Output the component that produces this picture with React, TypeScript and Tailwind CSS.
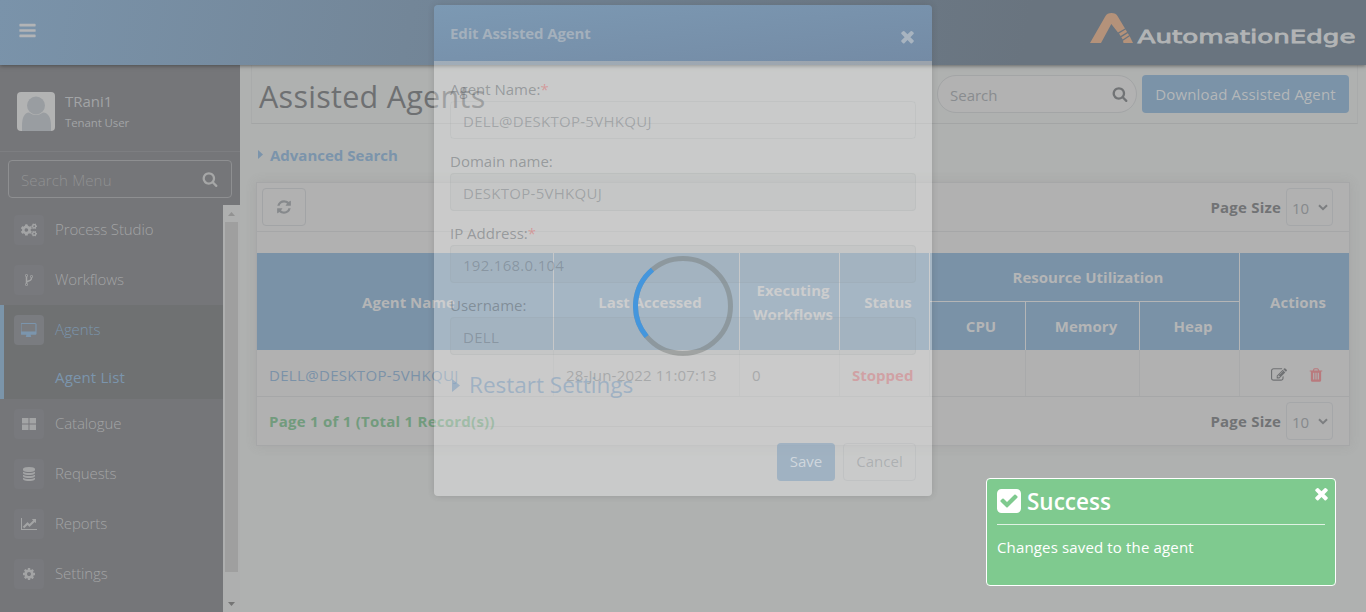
import React from 'react';
import { FaCogs } from 'react-icons/fa';

const PATHS = {
  bars: 'M1664 1344v128q0 26-19 45t-45 19h-1408q-26 0-45-19t-19-45v-128q0-26 19-45t45-19h1408q26 0 45 19t19 45zm0-512v128q0 26-19 45t-45 19h-1408q-26 0-45-19t-19-45v-128q0-26 19-45t45-19h1408q26 0 45 19t19 45zm0-512v128q0 26-19 45t-45 19h-1408q-26 0-45-19t-19-45v-128q0-26 19-45t45-19h1408q26 0 45 19t19 45z',
  times: 'M1490 1322q0 40-28 68l-136 136q-28 28-68 28t-68-28l-294-294-294 294q-28 28-68 28t-68-28l-136-136q-28-28-28-68t28-68l294-294-294-294q-28-28-28-68t28-68l136-136q28-28 68-28t68 28l294 294 294-294q28-28 68-28t68 28l136 136q28 28 28 68t-28 68l-294 294 294 294q28 28 28 68z',
  check: 'M813 1299l614-614q19-19 19-45t-19-45l-102-102q-19-19-45-19t-45 19l-467 467-211-211q-19-19-45-19t-45 19l-102 102q-19 19-19 45t19 45l358 358q19 19 45 19t45-19zm851-883v960q0 119-84.5 203.5t-203.5 84.5h-960q-119 0-203.5-84.5t-84.5-203.5v-960q0-119 84.5-203.5t203.5-84.5h960q119 0 203.5 84.5t84.5 203.5z',
  refresh: 'M1639 1056q0 5-1 7-64 268-268 434.5t-478 166.5q-146 0-282.5-55t-243.5-157l-129 129q-19 19-45 19t-45-19-19-45v-448q0-26 19-45t45-19h448q26 0 45 19t19 45-19 45l-137 137q71 66 161 102t187 36q134 0 250-65t186-179q11-17 53-117 8-23 30-23h192q13 0 22.5 9.5t9.5 22.5zm25-800v448q0 26-19 45t-45 19h-448q-26 0-45-19t-19-45 19-45l138-138q-148-137-349-137-134 0-250 65t-186 179q-11 17-53 117-8 23-30 23h-199q-13 0-22.5-9.5t-9.5-22.5v-7q65-268 270-434.5t480-166.5q146 0 284 55.5t245 156.5l130-129q19-19 45-19t45 19 19 45z',
  search: 'M1216 832q0-185-131.5-316.5t-316.5-131.5-316.5 131.5-131.5 316.5 131.5 316.5 316.5 131.5 316.5-131.5 131.5-316.5zm512 832q0 52-38 90t-90 38q-54 0-90-38l-343-342q-179 124-399 124-143 0-273.5-55.5t-225-150-150-225-55.5-273.5 55.5-273.5 150-225 225-150 273.5-55.5 273.5 55.5 225 150 150 225 55.5 273.5q0 220-124 399l343 343q37 37 37 90z',
  trash: 'M704 1376v-704q0-14-9-23t-23-9h-64q-14 0-23 9t-9 23v704q0 14 9 23t23 9h64q14 0 23-9t9-23zm256 0v-704q0-14-9-23t-23-9h-64q-14 0-23 9t-9 23v704q0 14 9 23t23 9h64q14 0 23-9t9-23zm256 0v-704q0-14-9-23t-23-9h-64q-14 0-23 9t-9 23v704q0 14 9 23t23 9h64q14 0 23-9t9-23zm-544-992h448l-48-117q-7-9-17-11h-317q-10 2-17 11zm928 32v64q0 14-9 23t-23 9h-96v948q0 83-47 143.5t-113 60.5h-832q-66 0-113-58.5t-47-141.5v-952h-96q-14 0-23-9t-9-23v-64q0-14 9-23t23-9h309l70-167q15-37 54-63t79-26h320q40 0 79 26t54 63l70 167h309q14 0 23 9t9 23z',
  edit: 'M888 1184l116-116-152-152-116 116v56h96v96h56zm440-720q-16-16-33 1l-350 350q-17 17-1 33t33-1l350-350q17-17 1-33zm80 594v190q0 119-84.5 203.5t-203.5 84.5h-832q-119 0-203.5-84.5t-84.5-203.5v-832q0-119 84.5-203.5t203.5-84.5h832q63 0 117 25 15 7 18 23 3 17-9 29l-49 49q-14 14-32 8-23-6-45-6h-832q-66 0-113 47t-47 113v832q0 66 47 113t113 47h832q66 0 113-47t47-113v-126q0-13 9-22l64-64q15-15 35-7t20 29zm-96-738l288 288-672 672h-288v-288zm444 132l-92 92-288-288 92-92q28-28 68-28t68 28l152 152q28 28 28 68t-28 68z',
  cog: 'M1152 896q0-106-75-181t-181-75-181 75-75 181 75 181 181 75 181-75 75-181zm512-109v222q0 12-8 23t-20 13l-185 28q-19 54-39 91 35 50 107 138 10 12 10 25t-9 23q-27 37-99 108t-94 71q-12 0-26-9l-138-108q-44 23-91 38-16 136-29 186-7 28-36 28h-222q-14 0-24.5-8.5t-11.5-21.5l-28-184q-49-16-90-37l-141 107q-10 9-25 9-14 0-25-11-126-114-165-168-7-10-7-23 0-12 8-23 15-21 51-66.5t54-70.5q-27-50-41-99l-183-27q-13-2-21-12.5t-8-23.5v-222q0-12 8-23t19-13l186-28q14-46 39-92-40-57-107-138-10-12-10-24 0-10 9-23 26-36 98.5-107.5t94.5-71.5q13 0 26 10l138 107q44-23 91-38 16-136 29-186 7-28 36-28h222q14 0 24.5 8.5t11.5 21.5l28 184q49 16 90 37l142-107q9-9 24-9 13 0 25 10 129 119 165 170 7 8 7 22 0 12-8 23-15 21-51 66.5t-54 70.5q26 50 41 98l183 28q13 2 21 12.5t8 23.5z',
  database: 'M896 768q237 0 443-43t325-127v170q0 69-103 128t-280 93.5-385 34.5-385-34.5-280-93.5-103-128v-170q119 84 325 127t443 43zm0 768q237 0 443-43t325-127v170q0 69-103 128t-280 93.5-385 34.5-385-34.5-280-93.5-103-128v-170q119 84 325 127t443 43zm0-384q237 0 443-43t325-127v170q0 69-103 128t-280 93.5-385 34.5-385-34.5-280-93.5-103-128v-170q119 84 325 127t443 43zm0-1152q208 0 385 34.5t280 93.5 103 128v128q0 69-103 128t-280 93.5-385 34.5-385-34.5-280-93.5-103-128v-128q0-69 103-128t280-93.5 385-34.5z',
  fork: 'M672 1472q0-40-28-68t-68-28-68 28-28 68 28 68 68 28 68-28 28-68zm0-1152q0-40-28-68t-68-28-68 28-28 68 28 68 68 28 68-28 28-68zm640 128q0-40-28-68t-68-28-68 28-28 68 28 68 68 28 68-28 28-68zm96 0q0 52-26 96.5t-70 69.5q-2 287-226 414-67 38-203 81-128 40-169.5 71t-41.5 100v26q44 25 70 69.5t26 96.5q0 80-56 136t-136 56-136-56-56-136q0-52 26-96.5t70-69.5v-820q-44-25-70-69.5t-26-96.5q0-80 56-136t136-56 136 56 56 136q0 52-26 96.5t-70 69.5v497q54-26 154-57 55-17 87.5-29.5t70.5-31 59-39.5 40.5-51 28-69.5 8.5-91.5q-44-25-70-69.5t-26-96.5q0-80 56-136t136-56 136 56 56 136z',
  chart: 'M2048 1536v128h-2048v-1536h128v1408h1920zm-128-1248v435q0 21-19.5 29.5t-35.5-7.5l-121-121-633 633q-10 10-23 10t-23-10l-233-233-416 416-192-192 585-585q10-10 23-10t23 10l233 233 464-464-121-121q-16-16-7.5-35.5t29.5-19.5h435q14 0 23 9t9 23z',
  desktop: 'M1728 992v-832q0-13-9.5-22.5t-22.5-9.5h-1600q-13 0-22.5 9.5t-9.5 22.5v832q0 13 9.5 22.5t22.5 9.5h1600q13 0 22.5-9.5t9.5-22.5zm128-832v1088q0 66-47 113t-113 47h-544q0 37 16 77.5t32 71 16 43.5q0 26-19 45t-45 19h-512q-26 0-45-19t-19-45q0-14 16-44t32-70 16-78h-544q-66 0-113-47t-47-113v-1088q0-66 47-113t113-47h1600q66 0 113 47t47 113z',
};

function Icon({ name, size, w = 1792, className = '' }: { name: keyof typeof PATHS; size: number; w?: number; className?: string }) {
  return (
    <svg width={(size * w) / 1792} height={size} viewBox={`0 0 ${w} 1792`} fill="currentColor" className={`shrink-0 ${className}`}>
      <path d={PATHS[name]} />
    </svg>
  );
}

function Brand() {
  return (
    <svg width="270" height="40" viewBox="0 0 270 40" className="shrink-0">
      <path d="M0 33 L15.5 6 Q17 3 21.5 3 Q26 3 27.5 6 L35 18.500 L28 22.500 L21.300 14 L11 33 Z" fill="#b4927a" />
      <path d="M35.600 19.600l1.500 2.500-6.500 4-1.600-2.500z M37.800 23.200l1.300 2.100-6.400 4.200-1.400-2.200z M39.700 26.300l3.300 6.700h-9.500l-.5-2.200z" fill="#b4927a" />
      <text x="47.500" y="33" fontFamily="DejaVu Sans" fontSize="18.500" fill="#b2b4b5" stroke="#b2b4b5" strokeWidth="0.800" textLength="218" lengthAdjust="spacingAndGlyphs">AutomationEdge</text>
    </svg>
  );
}

function MenuItem({ icon, label, active = false }: { icon: React.ReactNode; label: string; active?: boolean }) {
  return (
    <div className={`flex h-[50px] items-center pl-[14px] ${active ? 'text-[#7b95ad]' : 'text-[#a3a4a5]'}`}>
      <div className={`flex h-[30px] w-[30px] items-center justify-center rounded ${active ? 'bg-[#7a7c80]' : 'bg-[#78797d]'}`}>{icon}</div>
      <span className="ml-[11px] pb-0.5 font-light tracking-[-0.1px]">{label}</span>
    </div>
  );
}

function Sidebar() {
  return (
    <aside className="flex w-[240px] shrink-0 flex-col bg-[#757679]">
      <div className="flex h-[87px] items-start border-b border-[#7d7e81] pt-[27px] pl-[17px]">
        <svg width="38" height="39" viewBox="0 0 38 39">
          <rect width="38" height="39" rx="4" fill="#b2b3b3" />
          <circle cx="19" cy="13.500" r="9" fill="#999da1" />
          <path d="M5 39V34Q5 21 12 20.500Q19 25.500 26 20.500Q34 21 34 34V39Z" fill="#999da1" />
        </svg>
        <div className="ml-[10px] flex flex-col text-[#a2a4a6]">
          <span className="mt-[-2px] h-[22px] text-[15px] leading-[22px]">TRani1</span>
          <span className="h-[20px] pt-px text-[11.5px] leading-[20px] tracking-[-0.12px]">Tenant User</span>
        </div>
      </div>
      <div className="mx-2 mt-2 flex h-[38px] shrink-0 items-center justify-between rounded border border-[#8e8f91] px-[12px]">
        <span className="pt-0.5 font-light tracking-[0.15px] text-[#909192]">Search Menu</span>
        <Icon name="search" size={16} className="mr-px text-[#a6a7a7]" />
      </div>
      <div className="mt-[7px] flex min-h-0 flex-1">
        <nav className="flex w-[223px] flex-col">
          <MenuItem icon={<FaCogs size={16} />} label="Process Studio" />
          <MenuItem icon={<Icon name="fork" size={14} />} label="Workflows" />
          <div className="h-[94px] shrink-0 bg-[#6f7172] shadow-[inset_4px_0_0_#7b95aa]">
            <MenuItem active icon={<Icon name="desktop" size={15} w={1920} />} label="Agents" />
            <div className="pt-[10px] pl-[55px] tracking-[0.15px] text-[#7b95ad]">Agent List</div>
          </div>
          <MenuItem
            icon={<svg width="14" height="12" fill="currentColor"><path d="M0 0H6.500V5.500H0ZM7.500 0H14V5.500H7.500ZM0 6.500H6.500V12H0ZM7.500 6.500H14V12H7.500Z" /></svg>}
            label="Catalogue"
          />
          <MenuItem icon={<Icon name="database" size={14} />} label="Requests" />
          <MenuItem icon={<Icon name="chart" size={14} w={2048} />} label="Reports" />
          <MenuItem icon={<Icon name="cog" size={14} />} label="Settings" />
        </nav>
        <div className="flex w-[17px] flex-col items-center justify-between bg-[#aeafaf] pb-[6px]">
          <svg width="7" height="4" className="mt-[7px]"><path d="M3.500 0L7 4H0Z" fill="#929292" /></svg>
          <div className="mt-[6px] h-[350px] w-[13px] shrink-0 bg-[#9f9f9f]" />
          <div className="flex-1" />
          <svg width="7" height="4"><path d="M0 0H7L3.500 4Z" fill="#747474" /></svg>
        </div>
      </div>
    </aside>
  );
}

function PageSize() {
  return (
    <div className="flex items-center">
      <span className="mr-[5px] font-bold tracking-[0.2px] text-[#717375]">Page Size</span>
      <div className="mr-4 flex h-[38px] w-[47px] items-center rounded border border-[#a5a7a9] pl-[5px] text-[#86898c]">
        <span className="pt-0.5 tracking-[-0.2px]">10</span>
        <svg width="10" height="7" viewBox="0 0 10 7" className="ml-[9px]"><path d="M1 1.200L5 5.200L9 1.200" fill="none" stroke="#7c7e80" strokeWidth="2" /></svg>
      </div>
    </div>
  );
}

const TH = 'flex items-center justify-center border-[#b4b5b6] pl-[7px] text-center font-bold text-[#b4b5b6]';
const TD = 'flex h-[46px] items-center border-r border-[#a9aaab] pt-1 pl-[12px]';

function Main() {
  return (
    <main className="flex-1 bg-[#afb1b0] pl-[11px]">
      <div className="flex h-[59px] w-[1107px] items-center justify-between border-r border-b border-l border-r-[#a9abab] border-b-[#a3a5a5] border-l-[#a9abab] pr-[8px] pl-[7px]">
        <h1 className="pt-[3px] text-[30.5px] font-medium tracking-[0.28px] text-[#6e7072]">Assisted Agents</h1>
        <div className="flex">
          <div className="flex h-[38px] w-[200px] items-center justify-between rounded-full border border-[#a3a5a6] bg-[#b2b2b2] pr-[8px] pl-[12px] text-[#898c8f]">
            <span className="pt-0.5">Search</span>
            <Icon name="search" size={16} className="text-[#717375]" />
          </div>
          <button className="ml-[5px] h-[38px] w-[207px] rounded bg-[#7b93a8] tracking-[0.15px] text-[#b4b7b9]">Download Assisted Agent</button>
        </div>
      </div>
      <div className="flex h-[58px] items-center pt-[3px] pl-[7px] font-bold text-[#7b94ab]">
        <svg width="5" height="9" className="mr-[7px]"><path d="M0 0L5 4.500L0 9Z" fill="currentColor" /></svg>
        Advanced Search
      </div>
      <section className="ml-[5px] w-[1094px] border border-[#a6a7a8] bg-[#b1b1b1] shadow-[0_0_10px_rgba(120,110,110,0.16)]">
        <div className="flex h-[49px] items-center justify-between border-b border-[#a6a7a8] pl-[5px]">
          <div className="flex h-[38px] w-[44px] items-center justify-center rounded-sm border border-[#a2a4a6] text-[#86898c]"><Icon name="refresh" size={16} /></div>
          <PageSize />
        </div>
        <div className="h-[21px]" />
        <div className="grid grid-cols-[297px_186px_100px_90px_96px_114px_100px_109px] grid-rows-[49px_48px] bg-[#7a92a7]">
          <div className={`${TH} row-span-2 border-r`}>Agent Name</div>
          <div className={`${TH} row-span-2 border-r`}>Last Accessed</div>
          <div className={`${TH} row-span-2 border-r leading-[24px]`}>Executing<br />Workflows</div>
          <div className={`${TH} row-span-2 border-r`}>Status</div>
          <div className={`${TH} col-span-3 border-r border-b`}>Resource Utilization</div>
          <div className={`${TH} row-span-2`}>Actions</div>
          <div className={`${TH} border-r`}>CPU</div>
          <div className={`${TH} border-r`}>Memory</div>
          <div className={`${TH} border-r`}>Heap</div>
        </div>
        <div className="grid grid-cols-[297px_186px_100px_90px_96px_114px_100px_109px] border-b border-[#a6a7a8] text-[#7d7f81]">
          <div className={`${TD} tracking-[0.32px] text-[#7b92a8]`}>DELL@DESKTOP-5VHKQUJ</div>
          <div className={`${TD} tracking-[0.2px]`}>28-Jun-2022 11:07:13</div>
          <div className={TD}>0</div>
          <div className={`${TD} font-bold text-[#b97478]`}>Stopped</div>
          <div className={TD} />
          <div className={TD} />
          <div className={TD} />
          <div className="flex items-center pt-1 pl-[31px]">
            <Icon name="edit" size={16} className="text-[#707274]" />
            <Icon name="trash" size={16} className="ml-[21px] text-[#b97a7d]" />
          </div>
        </div>
        <div className="flex h-[48px] items-center justify-between pl-[12px]">
          <span className="font-bold tracking-[0.25px] text-[#729b7d]">Page 1 of 1 (Total 1 Record(s))</span>
          <PageSize />
        </div>
      </section>
    </main>
  );
}

function Field({ label, value, required = false, disabled = true }: { label: string; value: string; required?: boolean; disabled?: boolean }) {
  return (
    <div className="mb-[10px]">
      <label className="flex h-[24px] items-center text-[#484e54]/40">
        {label}
        {required && <span className="text-[#e06060]/45">*</span>}
      </label>
      <div className={`flex h-[38px] items-center rounded border border-[#8a9298]/12 px-[12px] pt-0.5 tracking-[0.28px] text-[#505860]/33 ${disabled ? 'bg-[#90969c]/8' : ''}`}>{value}</div>
    </div>
  );
}

function EditDialog() {
  return (
    <div className="absolute top-[5px] left-[434px] flex h-[491px] w-[498px] flex-col overflow-hidden rounded shadow-[0_0_6px_rgba(60,60,60,0.2)]">
      <div className="flex h-[56px] shrink-0 items-center justify-between bg-linear-to-br from-[#7c99b3] to-[#748ba5] pr-[15px] pl-[16px]">
        <span className="font-bold tracking-[-0.12px] text-[#a4b0bc]">Edit Assisted Agent</span>
        <Icon name="times" size={19} className="mt-[6px] text-[#a8b4c0]" />
      </div>
      <div className="flex flex-1 flex-col bg-white/33">
        <div className="h-[365px] px-4 pt-4">
          <Field label="Agent Name:" value="DELL@DESKTOP-5VHKQUJ" required disabled={false} />
          <Field label="Domain name:" value="DESKTOP-5VHKQUJ" />
          <Field label="IP Address:" value="192.168.0.104" required />
          <Field label="Username:" value="DELL" />
          <div className="flex h-[37px] items-center pt-[3px] pl-[2px] text-[22.500px] text-[#7498bc]/50">
            <svg width="8" height="13" className="mr-[9px]"><path d="M0 0L8 6.500L0 13Z" fill="currentColor" /></svg>
            Restart Settings
          </div>
        </div>
        <div className="flex justify-end gap-2 border-t border-[#909498]/12 px-4 pt-4">
          <button className="h-[38px] w-[58px] rounded bg-[#7899ba]/50 pb-0.5 text-[#dce0e4]/80">Save</button>
          <button className="h-[38px] w-[73px] rounded border border-[#8a9298]/15 pb-0.5 text-[#70787e]/33">Cancel</button>
        </div>
      </div>
    </div>
  );
}

function Spinner() {
  return (
    <svg width="100" height="100" viewBox="0 0 100 100" className="absolute top-[256px] left-[633px]">
      <circle cx="50" cy="50" r="47.500" fill="none" stroke="#747875" strokeOpacity="0.45" strokeWidth="5" />
      <path d="M13.600 80.500A47.500 47.500 0 0 1 19.500 13.600" fill="none" stroke="#4496dd" strokeWidth="5" />
    </svg>
  );
}

function Toast() {
  return (
    <div className="absolute top-[478px] left-[986px] h-[108px] w-[350px] rounded border border-white bg-[#7fca8f] px-[10px] text-white">
      <Icon name="times" size={19} className="absolute top-[5px] right-[4px]" />
      <div className="flex h-[46px] items-center border-b border-white/75">
        <Icon name="check" size={28} className="mt-[-2px] ml-[-2px]" />
        <span className="ml-[4px] text-[22.5px] font-semibold">Success</span>
      </div>
      <p className="pt-[10px] tracking-[0.15px]">Changes saved to the agent</p>
    </div>
  );
}

export default function App() {
  return (
    <div className="relative flex h-[612px] w-[1366px] flex-col overflow-hidden font-['Open_Sans',sans-serif] text-[15px] leading-[24px]">
      <header className="z-10 flex h-[65px] shrink-0 items-center justify-between bg-linear-[100deg] from-[#7a93aa] via-[#738698] via-30% to-[#69747f] to-75% pr-[6px] pl-[18px] shadow-[0_1px_4px_rgba(50,50,50,0.6)]">
        <Icon name="bars" size={19} className="mt-[-4px] text-[#b2b4b6]" />
        <div className="mt-[-5px]"><Brand /></div>
      </header>
      <div className="flex min-h-0 flex-1">
        <Sidebar />
        <Main />
      </div>
      <div className="absolute inset-0 z-20">
        <EditDialog />
        <Spinner />
        <Toast />
      </div>
    </div>
  );
}
